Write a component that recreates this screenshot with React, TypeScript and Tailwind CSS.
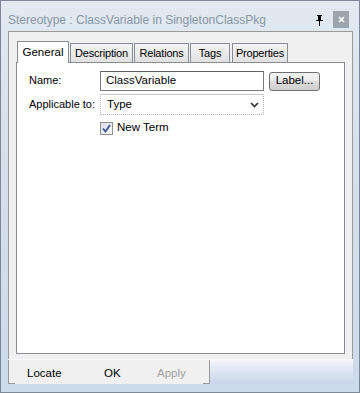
import React from 'react';

const tabs = [
  { label: 'General', w: 'w-[52px]', ml: 'ml-px', active: true },
  { label: 'Description', w: 'w-[63px]', ml: 'ml-px', active: false },
  { label: 'Relations', w: 'w-[55px]', ml: 'ml-px', active: false },
  { label: 'Tags', w: 'w-[40px]', ml: 'ml-px', active: false },
  { label: 'Properties', w: 'w-[56px]', ml: 'ml-[2px]', active: false },
];

function Pin() {
  return (
    <svg width="9" height="11" viewBox="0 0 9 11" className="block">
      <rect x="2" y="0" width="5" height="1" fill="#000" />
      <rect x="3" y="1" width="3" height="4" fill="#000" />
      <rect x="1" y="5" width="7" height="1" fill="#000" />
      <rect x="4" y="6" width="1" height="5" fill="#000" />
    </svg>
  );
}

export default function App() {
  return (
    <div
      className="w-[360px] h-[393px] flex flex-col border border-[#7d8896] bg-[linear-gradient(180deg,#e2e9f1_0%,#d6e0eb_40%,#cddaea_100%)] text-[11px] text-black"
      style={{ fontFamily: '"Liberation Sans", Arial, sans-serif' }}
    >
      {/* title bar */}
      <div className="h-[30px] flex items-center pl-[7px] pr-[10px] pt-[8px] shrink-0">
        <span className="text-[12px] text-[#8796a6] flex-1 leading-none">
          Stereotype : ClassVariable in SingletonClassPkg
        </span>
        <div className="mr-[9px] mt-[1px]">
          <Pin />
        </div>
        <div className="w-[16px] h-[17px] bg-[#9ca4ae] flex items-center justify-center -mt-[2px]">
          <svg width="7" height="7" viewBox="0 0 7 7">
            <path d="M1 1 L6 6 M6 1 L1 6" stroke="#fff" strokeWidth="1.6" />
          </svg>
        </div>
      </div>

      <div className="flex-1 flex flex-col ml-[7px] mr-[6px]">
        {/* property sheet panel */}
        <div className="flex-1 flex flex-col bg-[#f0f0f0] border-t border-l border-r border-[#9a9a9a] pt-[8px] pl-[7px] pr-[7px] pb-[5px]">
          <div className="flex items-end h-[22px] relative z-10">
            {tabs.map((t) =>
              t.active ? (
                <div
                  key={t.label}
                  className={`${t.w} ${t.ml} h-[22px] -mb-px bg-white border border-b-0 border-[#898c95] flex items-center justify-center text-[11.5px]`}
                >
                  {t.label}
                </div>
              ) : (
                <div
                  key={t.label}
                  className={`${t.w} ${t.ml} h-[19px] bg-[linear-gradient(180deg,#f4f4f4,#e1e1e1)] border border-b-0 border-[#898c95] flex items-center justify-center text-[11px] tracking-[-0.2px] pt-px`}
                >
                  {t.label}
                </div>
              )
            )}
          </div>
          <div className="flex-1 bg-white border border-[#898c95] pt-[8px] pl-[12px]">
            <div className="flex items-center h-[20px]">
              <span className="w-[71px] -mt-[2px]">Name:</span>
              <div className="w-[164px] h-[20px] border border-[#7a7a7a] border-t-[#5f5f5f] flex items-center pl-[5px] text-[11.5px]">
                ClassVariable
              </div>
              <div className="ml-[5px] w-[51px] h-[19px] rounded-[3px] border border-[#707070] bg-[linear-gradient(180deg,#f3f3f3_0%,#ebebeb_45%,#dddddd_50%,#cfcfcf_100%)] flex items-center justify-center text-[11.5px]">
                Label...
              </div>
            </div>
            <div className="flex items-center h-[21px] mt-[3px]">
              <span className="w-[71px]">Applicable to:</span>
              <div className="w-[164px] h-[21px] border border-dotted border-[#b0b0b0] [border-top-style:solid] border-t-[#c8c8c8] flex items-center pl-[6px] pr-[4px] text-[11.5px]">
                <span className="flex-1">Type</span>
                <svg width="9" height="6" viewBox="0 0 9 6">
                  <path d="M1 1 L4.5 4.5 L8 1" stroke="#333" strokeWidth="1.7" fill="none" />
                </svg>
              </div>
            </div>
            <div className="flex items-center mt-[6px] pl-[71px] h-[14px]">
              <div className="w-[13px] h-[13px] border border-[#8e8f8f] bg-[linear-gradient(135deg,#dcdfe6,#f6f7f9)] flex items-center justify-center">
                <svg width="9" height="9" viewBox="0 0 9 9">
                  <path d="M1 4.5 L3.5 7.5 L8 1" stroke="#3e5494" strokeWidth="1.8" fill="none" />
                </svg>
              </div>
              <span className="ml-[4px] text-[11.5px]">New Term</span>
            </div>
          </div>
        </div>

        {/* button bar */}
        <div className="h-[25px] flex shrink-0 border-t border-[#fafafa]">
          <div className="w-[201px] bg-[#f0f0f0] flex flex-col border-l border-[#9a9a9a]">
            <div className="flex-1 flex items-center pl-[18px] pt-[5px] text-[11.5px]">
              <span className="w-[77px]">Locate</span>
              <span className="w-[53px]">OK</span>
              <span className="text-[#a0a0a0]">Apply</span>
            </div>
            <div className="h-px flex justify-between">
              <div className="w-[6px] h-px bg-[#9a9a9a]" />
              <div className="w-[6px] h-px bg-[#9a9a9a]" />
            </div>
          </div>
          <div className="w-px bg-[#9a9a9a]" />
          <div className="flex-1 bg-[linear-gradient(180deg,#f4f7fb_0%,#e2e9f3_35%,#c9d5ea_100%)]" />
        </div>
        <div className="h-[8px] shrink-0" />
      </div>
    </div>
  );
}
